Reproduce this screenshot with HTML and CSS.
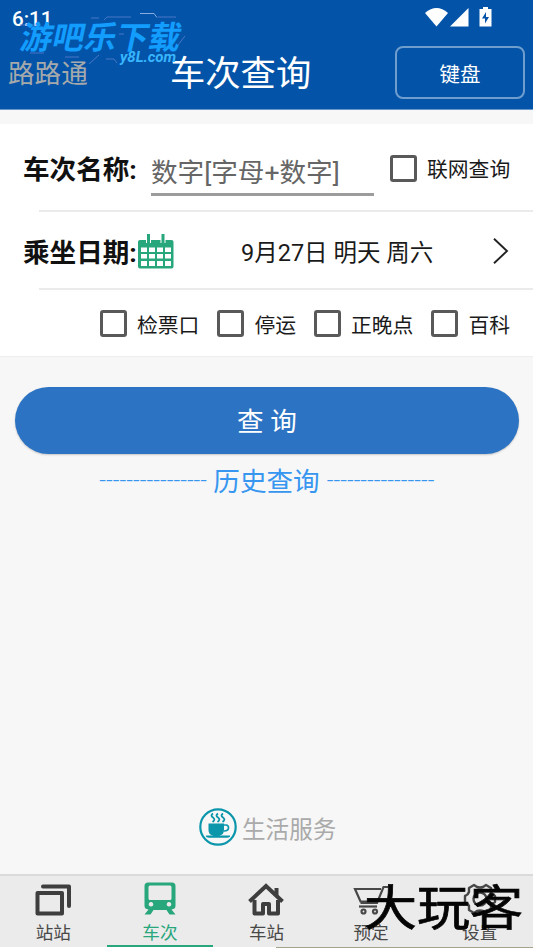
FILE: index.html
```html
<!DOCTYPE html>
<html lang="zh-CN">
<head>
<meta charset="utf-8">
<title>车次查询</title>
<link rel="stylesheet" href="styles.css">
</head>
<body>
<div class="app">
  <header class="header">
    <div class="status">
      <span class="clock">6:11</span>
      <svg class="status-icons" width="68" height="22" viewBox="0 0 68 22" fill="#fff">
        <path d="M0 6Q11.500-4 23 6L11.500 19.500Z"/>
        <path d="M43.500 1V19.500H25Z"/>
        <path fill-rule="evenodd" d="M58 0h5v2h3.500v17.500h-12V2H58zM61 5l-4 6.500h3v5l4-6.500h-3z"/>
      </svg>
    </div>
    <div class="titlebar">
      <span class="brand">路路通</span>
      <h1 class="title">车次查询</h1>
      <button class="keyboard">键盘</button>
    </div>
    <div class="mark-top">
      <svg class="mark-lines" width="190" height="66" viewBox="0 0 190 66" fill="none" stroke="#5b7fcb" stroke-width=".8">
        <path d="M104 20l3-3h24M158 17h18M20 25h18M91 18h8M65 57h14M30 53h14M106 59h8l3 4M89 64l10-9M178 45l7-9M119 34h5"/>
        <path d="M140 13.500h14l3 4" stroke="#a9c4ee"/>
      </svg>
      <span class="mark-name">游吧乐下载</span>
      <span class="mark-url">y8L.com</span>
    </div>
  </header>

  <main class="main">
    <section class="form">
      <div class="row row-name">
        <span class="label">车次名称:</span>
        <span class="input">数字[字母+数字]</span>
        <span class="check"><i class="box"></i><span>联网查询</span></span>
      </div>
      <div class="row row-date">
        <span class="label">乘坐日期:</span>
        <svg class="calendar" width="36" height="35" viewBox="0 0 36 35">
          <rect y="6" width="35.500" height="28.500" rx="2" fill="#28a67c"/>
          <path d="M10.500 0v9M25 0v9" stroke="#fff" stroke-width="5"/>
          <path d="M10.500 0v9M25 0v9" stroke="#28a67c" stroke-width="3"/>
          <path fill="#fff" d="M3 13.500h6v4.500H3zM11 13.500h6v4.500h-6zM19 13.500h6v4.500h-6zM27 13.500h6v4.500h-6zM3 20h6v4.500H3zM11 20h6v4.500h-6zM19 20h6v4.500h-6zM27 20h6v4.500h-6zM3 27h6v5H3zM11 27h6v5h-6zM19 27h6v5h-6zM27 27h6v5h-6z"/>
        </svg>
        <span class="date">9月27日 明天 周六</span>
        <svg class="chevron" width="16" height="26" viewBox="0 0 16 26" fill="none" stroke="#222" stroke-width="1.900"><path d="M1 .7l13 12.300L1 25.300"/></svg>
      </div>
      <div class="row row-options">
        <span class="check"><i class="box"></i><span>检票口</span></span>
        <span class="check"><i class="box"></i><span>停运</span></span>
        <span class="check"><i class="box"></i><span>正晚点</span></span>
        <span class="check"><i class="box"></i><span>百科</span></span>
      </div>
    </section>
    <button class="search">查 询</button>
    <div class="history"><span class="dash">----------------</span><span>历史查询</span><span class="dash">----------------</span></div>
    <div class="service">
      <svg width="38" height="38" viewBox="0 0 38 38" fill="none" stroke="#0b96ab">
        <circle cx="19" cy="19" r="17.700" stroke-width="2.200"/>
        <path fill="#0b96ab" stroke="none" d="M9.500 15.500H25V22q0 5-5 5.500h-5.500q-5-.5-5-5.500zM7 27.500h24v1.200q-1.500 1-3 1H10q-1.500 0-3-1z"/>
        <path d="M25 17h2q2.500.3 2.500 2.700 0 3-4.500 3.300" stroke-width="1.700"/>
        <path d="M14 5.500q-3 2 0 4t-.5 4.500M19 5.500q-3 2 0 4t-.5 4.500M24 5.500q-3 2 0 4t-.5 4.500" stroke-width="1.800"/>
      </svg>
      <span>生活服务</span>
    </div>
  </main>

  <nav class="tabs">
    <div class="tab">
      <svg width="36" height="34" viewBox="0 0 36 34" fill="none" stroke="#3e3e3e" stroke-width="4" stroke-linejoin="round" stroke-linecap="round"><rect x="2.500" y="11" width="24.500" height="20.500"/><path d="M8 4.500h26V24"/></svg>
      <span>站站</span>
    </div>
    <div class="tab active">
      <svg width="36" height="34" viewBox="0 0 36 34"><path fill="#28a67c" fill-rule="evenodd" d="M6 .5h24q3.500 0 3.500 3.500v20q0 3-4 3.500l4 5h-6l-3-4.500h-13l-3 4.500h-6l4-5q-4-.5-4-3.500V4Q2.500.5 6 .5zM6.500 5v11.500q0 1.500 1.500 1.500h20q1.500 0 1.500-1.500V5q0-1.500-1.500-1.500H8Q6.500 3.500 6.500 5zM9 20a2.300 2.300 0 1 0 .01 0zM27 20a2.300 2.300 0 1 0 .01 0z"/></svg>
      <span>车次</span>
    </div>
    <div class="tab">
      <svg width="36" height="34" viewBox="0 0 36 34" fill="none" stroke="#3e3e3e" stroke-width="4"><path d="M1.500 19.500L18 4l16.500 15.500"/><path d="M6.500 18v13.500H15V22h6v9.500h9V18" stroke-linejoin="round"/><path d="M28.500 6v8"/></svg>
      <span>车站</span>
    </div>
    <div class="tab tab-book">
      <svg width="36" height="34" viewBox="0 0 36 34" fill="none" stroke="#484848" stroke-width="2.200"><path d="M35 5h-4.500l-6.500 16H7.500M28 7H2l5.500 12.500H23"/><path d="M6 24.500h18" /><circle cx="10.500" cy="29.500" r="2"/><circle cx="22" cy="29.500" r="2"/></svg>
      <span>预定</span>
    </div>
    <div class="tab">
      <svg width="36" height="34" viewBox="0 0 36 34" fill="none" stroke="#484848" stroke-width="2.400"><path d="M12 3l3 2q3 1 6 0l3-2 5 3v4q1 3 4 4v6q-3 1-4 4v4l-5 3-3-2q-3-1-6 0l-3 2-5-3v-4q-1-3-4-4v-6q3-1 4-4V6z" stroke-linejoin="round"/><circle cx="18" cy="17" r="6.500"/></svg>
      <span>设置</span>
    </div>
    <span class="mark-bottom">大玩客</span>
  </nav>
  <div class="edge"></div>
</div>
</body>
</html>
```

FILE: styles.css
```css
* { box-sizing: border-box; }
body { margin: 0; background: #f7f7f7; font-family: Roboto, "Noto Sans CJK SC", sans-serif; color: #1a1a1a; }
button { font-family: inherit; padding: 0; }
.app { width: 533px; height: 948px; display: flex; flex-direction: column; overflow: hidden; }
.header { position: relative; height: 110px; background: #0354a8; border-bottom: 1px solid #6597cd; color: #fff; flex: none; }
.status { display: flex; justify-content: space-between; height: 37px; padding: 7px 40px 0 12px; }
.clock { font-size: 20.5px; line-height: 24px; font-weight: 500; }
.titlebar { display: grid; grid-template-columns: 162px 1fr 130px; align-items: center; height: 71px; padding: 0 8px; }
.brand { font-size: 26.6px; color: #a5a9ab; line-height: 40px; padding-top: 3px; }
.title { font-size: 35.3px; font-weight: 400; margin: 0; line-height: 52px; padding-top: 3px; }
.keyboard { width: 130px; height: 53px; border: 2px solid #6f9dcd; border-radius: 8px; background: none; color: #fff; font-size: 20.5px; padding-top: 1px; }
.mark-top { position: absolute; left: 0; top: 0; width: 190px; height: 66px; }
.mark-lines { position: absolute; left: 0; top: 0; }
.mark-name { position: absolute; left: 21px; top: 16px; font-size: 32px; line-height: 44px; font-weight: 700; color: #129dff; transform: skewX(-12deg); white-space: nowrap; }
.mark-url { position: absolute; left: 120px; top: 48px; font-size: 15px; line-height: 18px; font-weight: 700; font-style: italic; color: #38b6ff; }
.main { flex: 1; display: flex; flex-direction: column; padding-top: 14px; }
.form { background: #fff; height: 233px; border-bottom: 1px solid #eee; }
.row { display: flex; align-items: center; }
.row-name { height: 88px; padding-left: 23px; }
.row-date { height: 78px; padding-left: 23px; }
.row-name, .row-date { background: linear-gradient(#ebebeb, #ebebeb) 39px 100% / 494px 2px no-repeat; }
.row-options { height: 66px; padding-left: 100px; gap: 18px; }
.label { width: 115px; padding-bottom: 2px; font-size: 26.6px; font-weight: 700; white-space: nowrap; color: #111; }
.input { width: 223px; height: 47px; margin-left: 13px; padding-top: 4px; border-bottom: 3px solid #9c9c9c; font-size: 26.6px; line-height: 40px; color: #666; margin-top: 9px; white-space: nowrap; }
.row-name .check { margin-left: 16px; }
.check { display: flex; align-items: center; font-size: 20.8px; line-height: 30px; white-space: nowrap; }
.check span { padding-top: 4px; }
.row-options .check span { padding-top: 5px; }
.box { width: 27px; height: 27px; border: 3px solid #595959; border-radius: 3px; margin-right: 10px; }
.date { width: 193px; margin-left: 67px; font-size: 23.5px; white-space: nowrap; }
.chevron { margin-left: 59px; }
.search { width: 504px; height: 67px; margin: 30px 0 0 15px; padding-bottom: 2px; border: 0; border-radius: 34px; background: #2c73c3; color: #fff; font-size: 26.6px; box-shadow: 0 1px 2px #0003; }
.history { display: flex; justify-content: center; gap: 7px; font-size: 26.6px; line-height: 40px; margin-top: 8px; color: #3696f0; }
.dash { width: 107px; font-size: 23.5px; font-weight: 300; line-height: 36px; white-space: nowrap; }
.service { display: flex; align-items: center; gap: 5px; margin: auto 0 28px 199px; font-size: 23.6px; color: #aaa; }
.service span { padding-top: 2px; }
.tabs { position: relative; height: 73px; flex: none; display: grid; grid-template: 71px / repeat(5, 1fr); background: #ebebeb; border-top: 2px solid #dadada; }
.tab { display: flex; flex-direction: column; align-items: center; padding-top: 6px; font-size: 17.6px; line-height: 23px; color: #484848; }
.tab svg { margin-bottom: 6px; flex: none; }
.tab-book { padding-right: 4px; }
.tab.active { color: #28a67c; border-bottom: 2px solid #28a67c; }
.mark-bottom { position: absolute; left: 364px; top: -1px; font-size: 53px; line-height: 68px; color: #050505; white-space: nowrap; transform: scaleY(.9); -webkit-text-stroke: .8px #050505; }
.edge { height: 1px; flex: none; background: linear-gradient(90deg, #fff 276px, #a5a48a 276px); }
```
